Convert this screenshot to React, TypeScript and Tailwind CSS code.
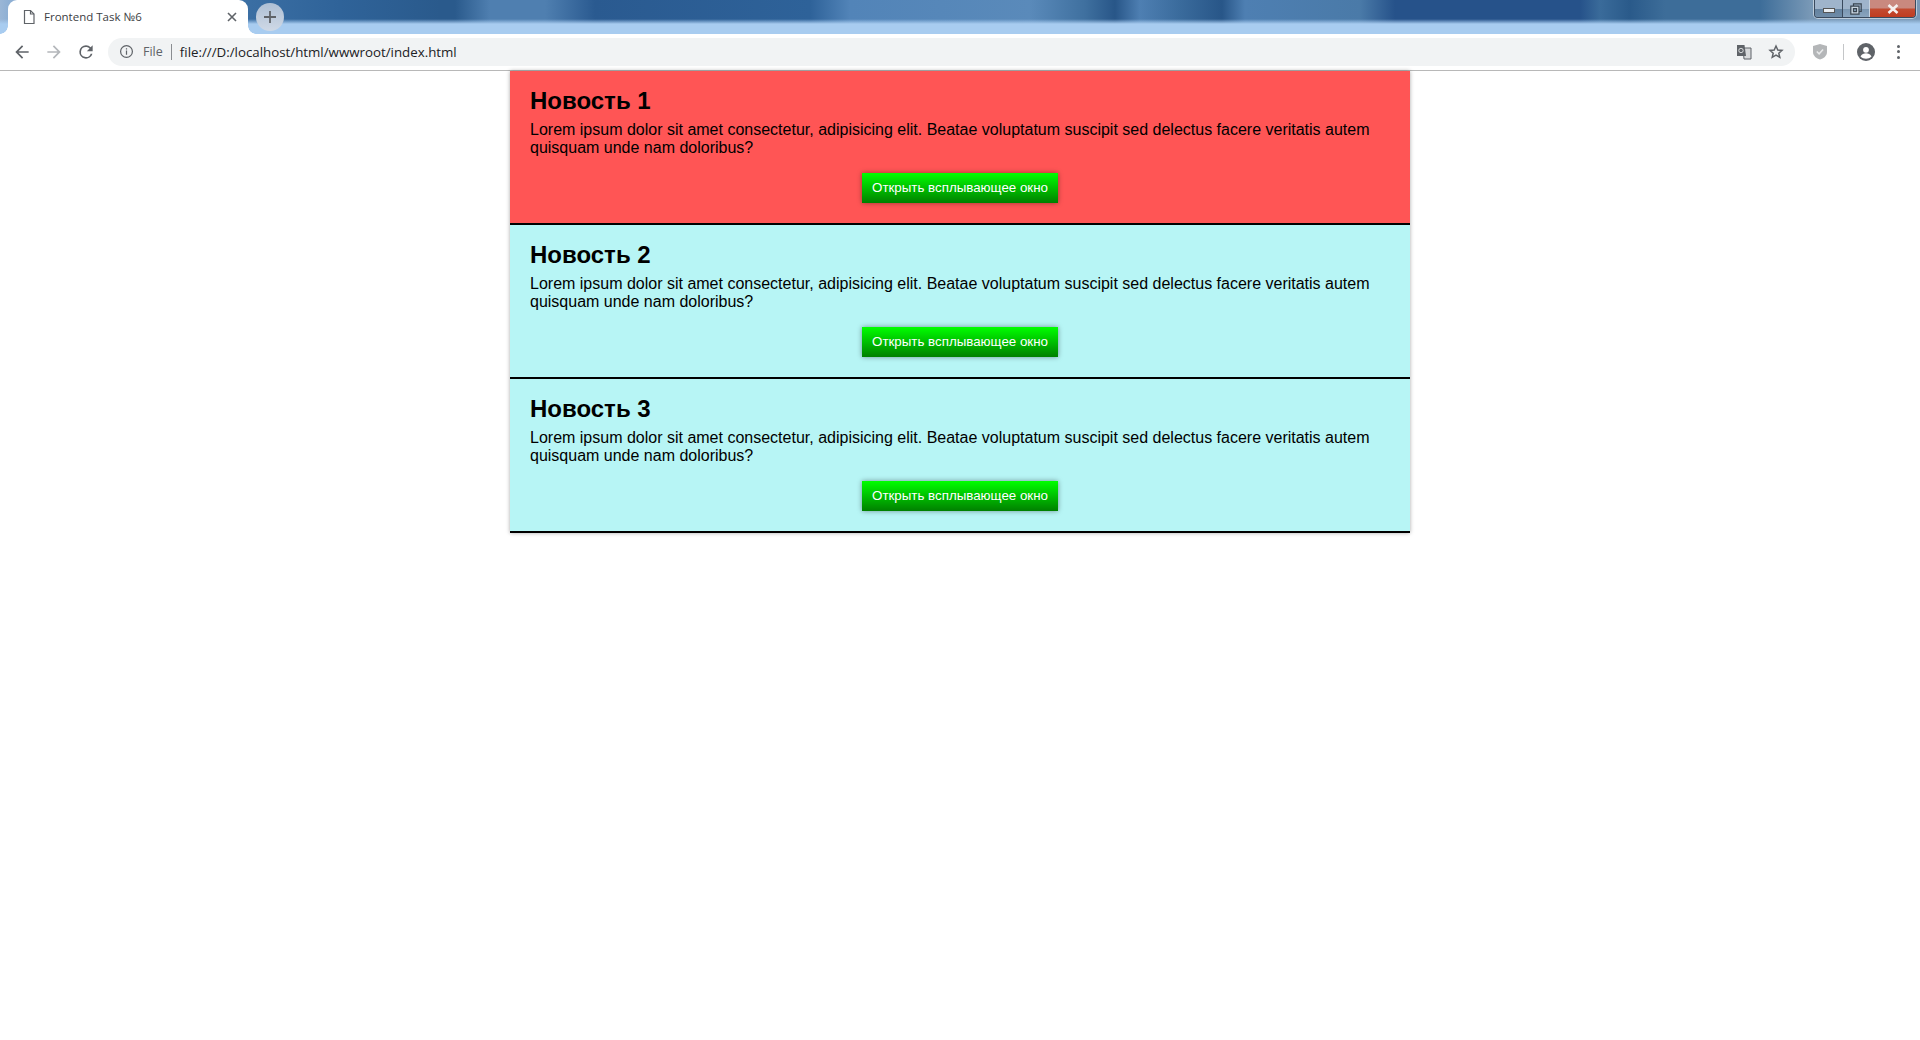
import React from "react";

const Reload = () => (
  <svg width="20" height="20" viewBox="0 0 24 24" fill="#5f6368">
    <path d="M17.65 6.35A7.96 7.96 0 0 0 12 4a8 8 0 1 0 7.73 10h-2.08A6 6 0 1 1 12 6c1.66 0 3.14.69 4.22 1.78L13 11h7V4l-2.35 2.35z" />
  </svg>
);

function Section({ n, active }: { n: number; active?: boolean }) {
  return (
    <section className={`border-b-2 border-black px-5 pt-[16px] pb-[20px] ${active ? "bg-[#ff5555]" : "bg-[#b7f5f5]"}`}>
      <h2 className="text-2xl leading-[28px] font-bold text-black">Новость {n}</h2>
      <p className="mt-[6px] text-base leading-[18px] text-black">
        Lorem ipsum dolor sit amet consectetur, adipisicing elit. Beatae voluptatum suscipit sed delectus facere veritatis autem quisquam unde nam doloribus?
      </p>
      <div className="mt-[16px] flex justify-center">
        <button className="h-[30px] w-[196px] bg-[linear-gradient(#00ff00,#008000)] text-[13.33px] leading-[30px] text-white shadow-[0_0_5px_rgba(0,0,0,0.4)]">
          Открыть всплывающее окно
        </button>
      </div>
    </section>
  );
}

export default function App() {
  return (
    <div className="min-h-[1040px] bg-white font-['Liberation_Sans',Arial,sans-serif]">
      <header className="flex h-[34px] items-stretch bg-[linear-gradient(180deg,rgba(255,255,255,0)_0,rgba(255,255,255,0)_19px,rgba(168,204,240,1)_24px,rgba(168,204,240,1)_100%),linear-gradient(90deg,#9ab6d6_0,#8fb0d4_8px,#3a6ea3_250px,#2f6399_340px,#2a5a8c_440px,#2a5a8c_455px,#4f7fb0_490px,#4f7fb0_545px,#2a5a90_595px,#2e6299_810px,#5284b8_850px,#5a8aba_1030px,#3f709f_1085px,#285688_1115px,#4e7fb2_1140px,#3a6b9c_1180px,#285688_1222px,#4e7fb2_1245px,#4a7aa8_1360px,#26528a_1395px,#26528a_1580px,#3a6b9a_1600px,#2a5a8a_1630px,#3d6d99_1665px,#3d6d99_1760px,#7898b6_1810px,#7898b6_1920px)]">
        <div className="relative ml-2 flex w-[240px] items-center rounded-t-[9px] bg-white pl-[14px] pr-[10px]">
          <span className="absolute bottom-0 -left-[8px] h-[8px] w-[8px] bg-[radial-gradient(circle_at_0_0,transparent_7.500px,#fff_8px)]" />
          <span className="absolute bottom-0 -right-[8px] h-[8px] w-[8px] bg-[radial-gradient(circle_at_100%_0,transparent_7.500px,#fff_8px)]" />
          <svg width="14" height="16" viewBox="0 0 14 16" fill="none" stroke="#5f6368" strokeWidth="1.2">
            <path d="M2.500 1.500h6l3.500 3.500v9.500h-9.500z" />
            <path d="M8.500 1.500v3.500h3.500" />
          </svg>
          <span className="ml-[8px] flex-1 text-[11.5px] text-[#3c4043] font-['Open_Sans',sans-serif]">Frontend Task №6</span>
          <svg width="12" height="12" viewBox="0 0 12 12" stroke="#5f6368" strokeWidth="1.6">
            <path d="M2 2l8 8M10 2l-8 8" />
          </svg>
        </div>
        <div className="ml-2 mt-[3px] flex h-[28px] w-[28px] items-center justify-center rounded-full bg-[linear-gradient(#aebfd4,#cfd9e6)]">
          <svg width="14" height="14" viewBox="0 0 14 14" stroke="#5f6368" strokeWidth="1.8">
            <path d="M7 1v12M1 7h12" />
          </svg>
        </div>
        <div className="ml-auto mr-[4px] flex h-[18px] w-[102px] overflow-hidden rounded-b-[4px] border border-t-0 border-[#3a4a5e] shadow-[0_0_0_1px_rgba(255,255,255,0.5)]">
          <div className="flex w-[28px] items-center justify-center border-r border-[#3a4a5e] bg-[linear-gradient(#9fb4cb_0,#9fb4cb_50%,#64829f_55%,#6f8ca8_100%)]">
            <div className="mt-[3px] h-[5px] w-[12px] border border-[#555] bg-[#e8edf2]" />
          </div>
          <div className="flex w-[27px] items-center justify-center border-r border-[#c8d4e0] bg-[linear-gradient(#9fb4cb_0,#9fb4cb_50%,#7b97b2_55%,#8aa5bf_100%)]">
            <svg width="12" height="12" viewBox="0 0 12 12" fill="none" stroke="#3a4550" strokeWidth="1.200"><path d="M3.500 3V.8h7.700v7.700H9" /><path d="M.8 3.200h8.200v8H.8z" fill="#c9d5e0" /><path d="M3.500 5.700h3v3h-3z" fill="#8aa5bf" /></svg>
          </div>
          <div className="flex flex-1 items-center justify-center bg-[linear-gradient(#c9897f_0,#c9897f_45%,#c24a30_55%,#c03c20_100%)]">
            <svg width="12" height="10" viewBox="0 0 12 10" stroke="#f5f0ee" strokeWidth="2.600"><path d="M1.500 1l9 8M10.500 1l-9 8" /></svg>
          </div>
        </div>
      </header>

      <nav className="flex h-[37px] items-center border-b border-[#b8b8b8] bg-white pb-[1px]">
        <div className="flex w-[108px] items-center pl-[12px]">
          <svg width="20" height="20" viewBox="0 0 24 24" fill="#5f6368"><path d="M20 11H7.830l5.590-5.590L12 4l-8 8 8 8 1.410-1.410L7.830 13H20z" /></svg>
          <svg width="20" height="20" viewBox="0 0 24 24" fill="#b4b7bb" className="ml-[12px]"><path d="M12 4l-1.410 1.410L16.170 11H4v2h12.170l-5.580 5.590L12 20l8-8z" /></svg>
          <span className="ml-[12px] flex"><Reload /></span>
        </div>
        <div className="flex h-[28px] w-[1687px] items-center rounded-full bg-[#f1f3f4] pl-[11px] pr-[9px]">
          <svg width="15" height="15" viewBox="0 0 16 16" fill="none" stroke="#5f6368" strokeWidth="1.300">
            <circle cx="8" cy="8" r="6.300" />
            <path d="M8 7v4.500M8 4.500v1.400" />
          </svg>
          <span className="ml-[9px] pt-[2px] text-[12.500px] text-[#5f6368] font-['Open_Sans',sans-serif]">File</span>
          <span className="ml-[8px] h-[16px] w-px bg-[#8a8d91]" />
          <span className="ml-[8px] flex-1 pt-[2px] text-[13.300px] text-[#202124] font-['Open_Sans',sans-serif]">file:///D:/localhost/html/wwwroot/index.html</span>
          <svg width="16" height="16" viewBox="0 0 16 16" className="mr-[16px]">
            <path d="M7 4h8v11H8z" fill="#d7d9db" stroke="#5f6368" />
            <path d="M1 1h7.500l1.500 11H1z" fill="#5f6368" />
            <circle cx="5" cy="6.500" r="2.200" fill="none" stroke="#d7d9db" strokeWidth="1" />
          </svg>
          <svg width="16" height="16" viewBox="0 0 24 24" fill="none" stroke="#5f6368" strokeWidth="2.200" className="mr-[2px]">
            <path d="M12 3l2.700 6 6.300.6-4.800 4.200 1.500 6.200L12 16.700 6.300 20l1.500-6.200L3 9.600 9.300 9z" />
          </svg>
        </div>
        <svg width="16" height="17" viewBox="0 0 16 17" className="ml-[17px]">
          <path d="M8 1l7 2v6c0 4-3.500 6.500-7 7.500C4.500 15.500 1 13 1 9V3z" fill="#b4b6b8" />
          <path d="M4.800 8.500l2.300 2.300 4-4.300" fill="none" stroke="#e9eaeb" strokeWidth="1.500" />
        </svg>
        <span className="ml-[15px] h-[16px] w-px bg-[#c4c6c8]" />
        <svg width="18" height="18" viewBox="0 0 18 18" className="ml-[13px]">
          <circle cx="9" cy="9" r="9" fill="#5f6368" />
          <circle cx="9" cy="6.800" r="2.900" fill="#fff" />
          <path d="M3.500 13.500c1-2.500 3.500-3.200 5.500-3.200s4.500.7 5.500 3.200C13 15 11 15.700 9 15.700S5 15 3.500 13.500z" fill="#fff" />
        </svg>
        <div className="ml-[22px] flex flex-col gap-[2.500px]">
          <span className="h-[3px] w-[3px] rounded-full bg-[#5f6368]" />
          <span className="h-[3px] w-[3px] rounded-full bg-[#5f6368]" />
          <span className="h-[3px] w-[3px] rounded-full bg-[#5f6368]" />
        </div>
      </nav>

      <main className="mx-auto w-[900px] shadow-[0_0_4px_rgba(0,0,0,0.35)]">
        <Section n={1} active />
        <Section n={2} />
        <Section n={3} />
      </main>
    </div>
  );
}
